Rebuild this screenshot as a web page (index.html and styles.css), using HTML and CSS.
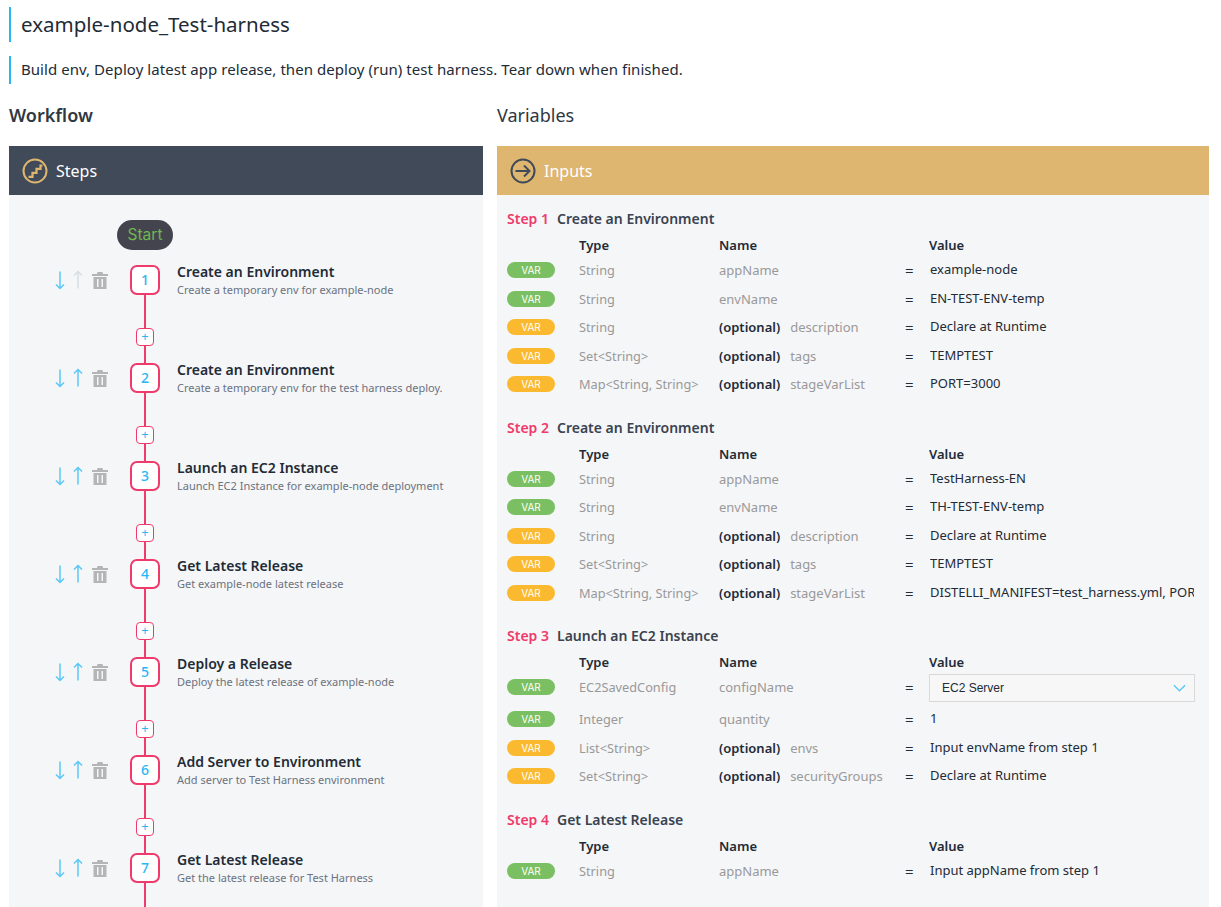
FILE: index.html
```html
<!DOCTYPE html>
<html lang="en">
<head>
    <meta charset="UTF-8">
    <meta name="viewport" content="width=device-width, initial-scale=1.0">
    <title>example-node_Test-harness</title>
    <link rel="stylesheet" href="styles.css">
</head>
<body>
    <svg class="defs" width="0" height="0">
        <symbol id="arrow-down" viewBox="0 0 12 20"><path d="M6 1.500v17M2 14.500l4 4 4-4" fill="none" stroke="currentColor" stroke-width="1.500"/></symbol>
        <symbol id="arrow-up" viewBox="0 0 12 20"><path d="M6 18.500v-17M2 5.500l4-4 4 4" fill="none" stroke="currentColor" stroke-width="1.500"/></symbol>
        <symbol id="trash" viewBox="0 0 16 17"><path d="M5.500 0h5l.5 2h5v2H0V2h5zM1.500 5h13v12h-13zM5 7v8h1.500V7zM9.500 7v8H11V7z" fill="currentColor" fill-rule="evenodd"/></symbol>
    </svg>

    <div class="title">example-node_Test-harness</div>
    <div class="description">Build env, Deploy latest app release, then deploy (run) test harness. Tear down when finished.</div>

    <div class="columns">
        <div class="workflow">
            <h2 class="heading heading-bold">Workflow</h2>
            <div class="panel">
                <div class="panel-header panel-header-dark">
                    <svg class="panel-icon" viewBox="0 0 26 26"><circle cx="13" cy="13" r="11.500" fill="none" stroke="#dfb66f" stroke-width="2"/><path d="M6.500 18.800h4v-4h4v-4h4V7.500h2" fill="none" stroke="#dfb66f" stroke-width="2.200"/></svg>
                    <span>Steps</span>
                </div>
                <div class="panel-body steps">
                    <div class="start">Start</div>

                    <div class="step">
                        <div class="step-actions">
                            <svg class="act act-arrow"><use href="#arrow-down"/></svg>
                            <svg class="act act-arrow act-off"><use href="#arrow-up"/></svg>
                            <svg class="act act-trash"><use href="#trash"/></svg>
                        </div>
                        <div class="step-track"><div class="step-num">1</div><div class="step-add">+</div></div>
                        <div class="step-text"><div class="step-title">Create an Environment</div><div class="step-desc">Create a temporary env for example-node</div></div>
                    </div>
                    <div class="step">
                        <div class="step-actions">
                            <svg class="act act-arrow"><use href="#arrow-down"/></svg>
                            <svg class="act act-arrow"><use href="#arrow-up"/></svg>
                            <svg class="act act-trash"><use href="#trash"/></svg>
                        </div>
                        <div class="step-track"><div class="step-num">2</div><div class="step-add">+</div></div>
                        <div class="step-text"><div class="step-title">Create an Environment</div><div class="step-desc">Create a temporary env for the test harness deploy.</div></div>
                    </div>
                    <div class="step">
                        <div class="step-actions">
                            <svg class="act act-arrow"><use href="#arrow-down"/></svg>
                            <svg class="act act-arrow"><use href="#arrow-up"/></svg>
                            <svg class="act act-trash"><use href="#trash"/></svg>
                        </div>
                        <div class="step-track"><div class="step-num">3</div><div class="step-add">+</div></div>
                        <div class="step-text"><div class="step-title">Launch an EC2 Instance</div><div class="step-desc">Launch EC2 Instance for example-node deployment</div></div>
                    </div>
                    <div class="step">
                        <div class="step-actions">
                            <svg class="act act-arrow"><use href="#arrow-down"/></svg>
                            <svg class="act act-arrow"><use href="#arrow-up"/></svg>
                            <svg class="act act-trash"><use href="#trash"/></svg>
                        </div>
                        <div class="step-track"><div class="step-num">4</div><div class="step-add">+</div></div>
                        <div class="step-text"><div class="step-title">Get Latest Release</div><div class="step-desc">Get example-node latest release</div></div>
                    </div>
                    <div class="step">
                        <div class="step-actions">
                            <svg class="act act-arrow"><use href="#arrow-down"/></svg>
                            <svg class="act act-arrow"><use href="#arrow-up"/></svg>
                            <svg class="act act-trash"><use href="#trash"/></svg>
                        </div>
                        <div class="step-track"><div class="step-num">5</div><div class="step-add">+</div></div>
                        <div class="step-text"><div class="step-title">Deploy a Release</div><div class="step-desc">Deploy the latest release of example-node</div></div>
                    </div>
                    <div class="step">
                        <div class="step-actions">
                            <svg class="act act-arrow"><use href="#arrow-down"/></svg>
                            <svg class="act act-arrow"><use href="#arrow-up"/></svg>
                            <svg class="act act-trash"><use href="#trash"/></svg>
                        </div>
                        <div class="step-track"><div class="step-num">6</div><div class="step-add">+</div></div>
                        <div class="step-text"><div class="step-title">Add Server to Environment</div><div class="step-desc">Add server to Test Harness environment</div></div>
                    </div>
                    <div class="step">
                        <div class="step-actions">
                            <svg class="act act-arrow"><use href="#arrow-down"/></svg>
                            <svg class="act act-arrow"><use href="#arrow-up"/></svg>
                            <svg class="act act-trash"><use href="#trash"/></svg>
                        </div>
                        <div class="step-track"><div class="step-num">7</div><div class="step-add">+</div></div>
                        <div class="step-text"><div class="step-title">Get Latest Release</div><div class="step-desc">Get the latest release for Test Harness</div></div>
                    </div>
                </div>
            </div>
        </div>

        <div class="variables">
            <h2 class="heading">Variables</h2>
            <div class="panel">
                <div class="panel-header panel-header-gold">
                    <svg class="panel-icon" viewBox="0 0 26 26"><circle cx="13" cy="13" r="11.500" fill="none" stroke="#414a58" stroke-width="2"/><path d="M5.500 13h14M14 7.500l5.500 5.500-5.500 5.500" fill="none" stroke="#414a58" stroke-width="2"/></svg>
                    <span>Inputs</span>
                </div>
                <div class="panel-body inputs">

                    <div class="input-group">
                        <div class="group-title"><span class="group-step">Step 1</span>Create an Environment</div>
                        <div class="row row-head"><span class="col-badge"></span><span class="col-type">Type</span><span class="col-name">Name</span><span class="col-eq"></span><span class="col-value">Value</span></div>
                        <div class="row"><span class="col-badge"><span class="badge">VAR</span></span><span class="col-type">String</span><span class="col-name">appName</span><span class="col-eq">=</span><span class="col-value">example-node</span></div>
                        <div class="row"><span class="col-badge"><span class="badge">VAR</span></span><span class="col-type">String</span><span class="col-name">envName</span><span class="col-eq">=</span><span class="col-value">EN-TEST-ENV-temp</span></div>
                        <div class="row"><span class="col-badge"><span class="badge badge-opt">VAR</span></span><span class="col-type">String</span><span class="col-name"><b>(optional)</b>description</span><span class="col-eq">=</span><span class="col-value">Declare at Runtime</span></div>
                        <div class="row"><span class="col-badge"><span class="badge badge-opt">VAR</span></span><span class="col-type">Set&lt;String&gt;</span><span class="col-name"><b>(optional)</b>tags</span><span class="col-eq">=</span><span class="col-value">TEMPTEST</span></div>
                        <div class="row"><span class="col-badge"><span class="badge badge-opt">VAR</span></span><span class="col-type">Map&lt;String, String&gt;</span><span class="col-name"><b>(optional)</b>stageVarList</span><span class="col-eq">=</span><span class="col-value">PORT=3000</span></div>
                    </div>

                    <div class="input-group">
                        <div class="group-title"><span class="group-step">Step 2</span>Create an Environment</div>
                        <div class="row row-head"><span class="col-badge"></span><span class="col-type">Type</span><span class="col-name">Name</span><span class="col-eq"></span><span class="col-value">Value</span></div>
                        <div class="row"><span class="col-badge"><span class="badge">VAR</span></span><span class="col-type">String</span><span class="col-name">appName</span><span class="col-eq">=</span><span class="col-value">TestHarness-EN</span></div>
                        <div class="row"><span class="col-badge"><span class="badge">VAR</span></span><span class="col-type">String</span><span class="col-name">envName</span><span class="col-eq">=</span><span class="col-value">TH-TEST-ENV-temp</span></div>
                        <div class="row"><span class="col-badge"><span class="badge badge-opt">VAR</span></span><span class="col-type">String</span><span class="col-name"><b>(optional)</b>description</span><span class="col-eq">=</span><span class="col-value">Declare at Runtime</span></div>
                        <div class="row"><span class="col-badge"><span class="badge badge-opt">VAR</span></span><span class="col-type">Set&lt;String&gt;</span><span class="col-name"><b>(optional)</b>tags</span><span class="col-eq">=</span><span class="col-value">TEMPTEST</span></div>
                        <div class="row"><span class="col-badge"><span class="badge badge-opt">VAR</span></span><span class="col-type">Map&lt;String, String&gt;</span><span class="col-name"><b>(optional)</b>stageVarList</span><span class="col-eq">=</span><span class="col-value">DISTELLI_MANIFEST=test_harness.yml, PORT=3000</span></div>
                    </div>

                    <div class="input-group">
                        <div class="group-title"><span class="group-step">Step 3</span>Launch an EC2 Instance</div>
                        <div class="row row-head"><span class="col-badge"></span><span class="col-type">Type</span><span class="col-name">Name</span><span class="col-eq"></span><span class="col-value">Value</span></div>
                        <div class="row row-select"><span class="col-badge"><span class="badge">VAR</span></span><span class="col-type">EC2SavedConfig</span><span class="col-name">configName</span><span class="col-eq">=</span>
                            <span class="col-value col-select">EC2 Server<svg class="chevron" viewBox="0 0 14 8"><path d="M1 1l6 6 6-6" fill="none" stroke="#5cc8f5" stroke-width="1.500"/></svg></span>
                        </div>
                        <div class="row"><span class="col-badge"><span class="badge">VAR</span></span><span class="col-type">Integer</span><span class="col-name">quantity</span><span class="col-eq">=</span><span class="col-value">1</span></div>
                        <div class="row"><span class="col-badge"><span class="badge badge-opt">VAR</span></span><span class="col-type">List&lt;String&gt;</span><span class="col-name"><b>(optional)</b>envs</span><span class="col-eq">=</span><span class="col-value">Input envName from step 1</span></div>
                        <div class="row"><span class="col-badge"><span class="badge badge-opt">VAR</span></span><span class="col-type">Set&lt;String&gt;</span><span class="col-name"><b>(optional)</b>securityGroups</span><span class="col-eq">=</span><span class="col-value">Declare at Runtime</span></div>
                    </div>

                    <div class="input-group">
                        <div class="group-title"><span class="group-step">Step 4</span>Get Latest Release</div>
                        <div class="row row-head"><span class="col-badge"></span><span class="col-type">Type</span><span class="col-name">Name</span><span class="col-eq"></span><span class="col-value">Value</span></div>
                        <div class="row"><span class="col-badge"><span class="badge">VAR</span></span><span class="col-type">String</span><span class="col-name">appName</span><span class="col-eq">=</span><span class="col-value">Input appName from step 1</span></div>
                    </div>

                </div>
            </div>
        </div>
    </div>
</body>
</html>
```

FILE: styles.css
```css
html, body {
    height: 907px;
    overflow: hidden;
}
body {
    margin: 0;
    padding: 7px 12px 0 9px;
    box-sizing: border-box;
    font-family: "Noto Sans", "Open Sans", sans-serif;
    color: #222b36;
    background: #fff;
}
.defs {
    position: absolute;
}
.title {
    border-left: 2px solid #29b6f6;
    padding-left: 10px;
    height: 35px;
    line-height: 35px;
    font-size: 20.500px;
}
.description {
    border-left: 2px solid #29b6f6;
    padding-left: 10px;
    margin-top: 14px;
    height: 28px;
    line-height: 27px;
    font-size: 15px;
    letter-spacing: .05px;
}
.columns {
    display: flex;
    gap: 14px;
    margin-top: 16px;
}
.workflow {
    width: 474px;
    flex: none;
}
.variables {
    flex: 1;
    min-width: 0;
}
.heading {
    margin: 0 0 16px;
    height: 30px;
    line-height: 30px;
    font-size: 18px;
    font-weight: 400;
    color: #2f3742;
}
.heading-bold {
    font-weight: 600;
}
.panel-header {
    display: flex;
    align-items: center;
    gap: 8px;
    height: 49px;
    padding-left: 13px;
    font-size: 16px;
    color: #fff;
}
.panel-header-dark {
    background: #414a58;
}
.panel-header-gold {
    background: #deb66f;
}
.panel-icon {
    width: 26px;
    height: 26px;
}
.panel-body {
    background: #f5f6f8;
    height: 712px;
    overflow: hidden;
}

/* steps column */
.steps {
    padding-top: 25px;
    box-sizing: border-box;
}
.start {
    width: 56px;
    height: 30px;
    margin-left: 108px;
    border-radius: 15px;
    background: #44444f;
    color: #6fb750;
    font-family: Inter, sans-serif;
    font-size: 15.500px;
    line-height: 29px;
    text-align: center;
}
.step {
    display: flex;
    height: 98px;
}
.steps .start + .step {
    margin-top: 15px;
}
.step-actions {
    display: flex;
    align-items: center;
    width: 121px;
    height: 30px;
    padding-left: 45px;
    box-sizing: border-box;
}
.act-arrow {
    width: 12px;
    height: 20px;
    margin-right: 6px;
    color: #5cc8f5;
}
.act-off {
    color: #d5dee3;
}
.act-trash {
    width: 16px;
    height: 17px;
    margin-left: 2px;
    color: #b5b5b5;
}
.step-track {
    position: relative;
    width: 30px;
    flex: none;
    background: linear-gradient(#ef3a6b, #ef3a6b) center / 2px 100% no-repeat;
}
.step-num {
    width: 30px;
    height: 30px;
    box-sizing: border-box;
    border: 2px solid #ef3a6b;
    border-radius: 7px;
    background: #fff;
    color: #29b6f6;
    font-size: 14px;
    font-weight: 500;
    line-height: 26px;
    text-align: center;
}
.step-add {
    position: absolute;
    left: 6px;
    top: 63px;
    width: 18px;
    height: 18px;
    box-sizing: border-box;
    border: 1px solid #ef3a6b;
    border-radius: 4px;
    background: #fff;
    color: #29b6f6;
    font-size: 13px;
    line-height: 15px;
    text-align: center;
}
.step-text {
    padding-left: 17px;
}
.step-title {
    margin-top: -3px;
    font-size: 14px;
    font-weight: 600;
    line-height: 20px;
    color: #222b36;
}
.step-desc {
    font-size: 11px;
    line-height: 16px;
    color: #6b7280;
}

/* inputs column */
.inputs {
    padding: 12px 14px 0 10px;
    box-sizing: border-box;
}
.input-group {
    margin-bottom: 17px;
}
.group-title {
    height: 24px;
    line-height: 24px;
    font-size: 14px;
    font-weight: 600;
    color: #3a4350;
}
.group-step {
    color: #ef3a6b;
    margin-right: 8px;
}
.row {
    display: flex;
    align-items: center;
    height: 28.500px;
    font-size: 13px;
    color: #999;
}
.row-head {
    height: 22px;
    margin-top: 3px;
    font-weight: 600;
    color: #222b36;
}
.row-select {
    height: 28px;
    margin-bottom: 4px;
}
.col-badge {
    width: 72px;
    flex: none;
    display: flex;
}
.badge {
    width: 48px;
    height: 16px;
    border-radius: 8px;
    background: #7abf62;
    color: #fff;
    font-family: Inter, sans-serif;
    font-size: 10px;
    line-height: 16px;
    text-align: center;
}
.badge-opt {
    background: #fbb92f;
}
.col-type {
    width: 140px;
    flex: none;
    font-size: 12.750px;
}
.col-name {
    width: 186px;
    flex: none;
}
.col-name b {
    font-weight: 600;
    color: #222b36;
    margin-right: 10px;
}
.col-eq {
    width: 25px;
    flex: none;
    color: #222b36;
    font-size: 15px;
}
.col-value {
    width: 264px;
    flex: none;
    margin-top: -2px;
    overflow: hidden;
    white-space: nowrap;
    font-size: 13px;
    color: #222b36;
}
.row-head .col-value {
    margin-top: 0;
    margin-left: -1px;
}
.row-head .col-type {
    font-size: 13px;
}
.col-select {
    display: flex;
    align-items: center;
    justify-content: space-between;
    width: 266px;
    height: 28px;
    padding: 0 8px 0 12px;
    margin-top: 1px;
    margin-left: -1px;
    box-sizing: border-box;
    border: 1px solid #d9d9d9;
    background: #f7f7f7;
    font-family: "Liberation Sans", Arial, sans-serif;
    font-size: 12px;
}
.chevron {
    width: 13px;
    height: 8px;
}
```
